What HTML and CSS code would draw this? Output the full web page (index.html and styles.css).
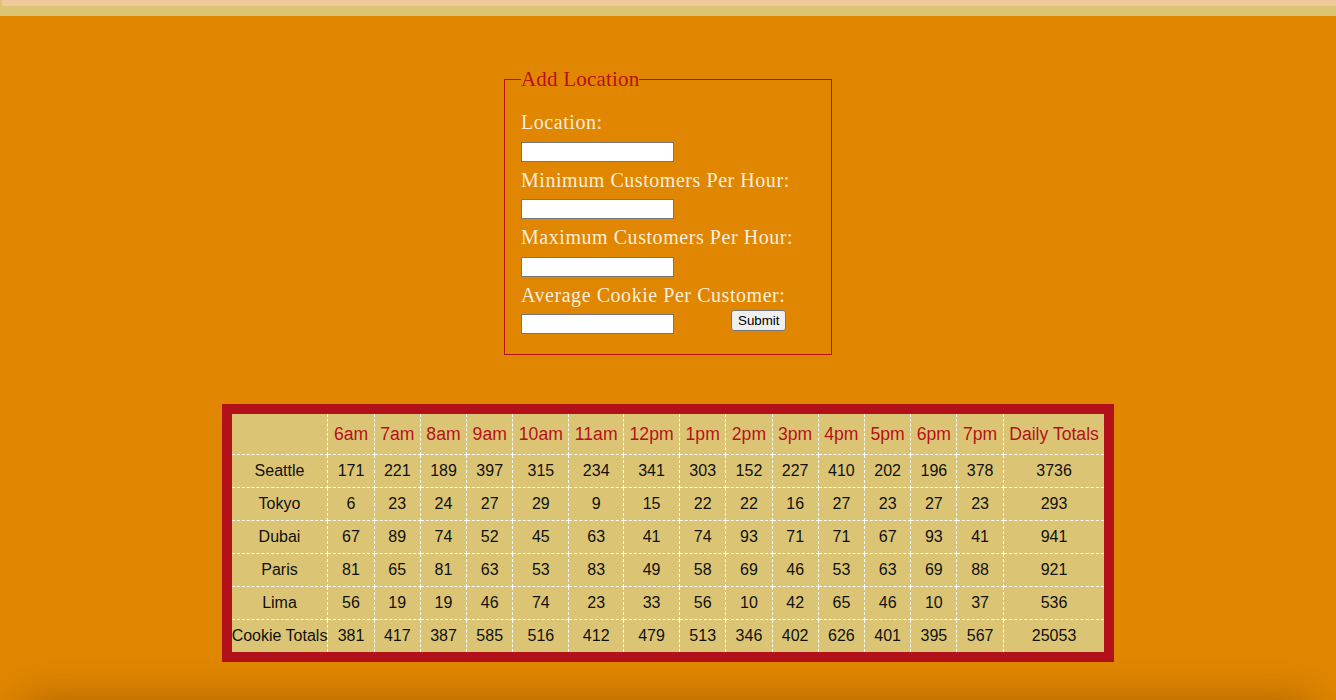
FILE: index.html
```html
<!DOCTYPE html>
<html lang="en">
<head>
<meta charset="utf-8">
<title>Salmon Cookies - Sales</title>
<link rel="stylesheet" href="styles.css">
</head>
<body>
<header class="topbar"><div class="topbar-strip"></div></header>
<main class="content">
  <form class="location-form">
    <fieldset class="form-box">
      <legend class="form-title">Add Location</legend>
      <label class="field-label" for="loc">Location:</label>
      <input class="field-input" id="loc" type="text">
      <label class="field-label" for="min">Minimum Customers Per Hour:</label>
      <input class="field-input" id="min" type="text">
      <label class="field-label" for="max">Maximum Customers Per Hour:</label>
      <input class="field-input" id="max" type="text">
      <label class="field-label" for="avg">Average Cookie Per Customer:</label>
      <div class="submit-row">
        <input class="field-input" id="avg" type="text">
        <button class="submit-btn" type="submit">Submit</button>
      </div>
    </fieldset>
  </form>

  <table class="sales">
    <thead>
      <tr>
        <th></th><th>6am</th><th>7am</th><th>8am</th><th>9am</th><th>10am</th><th>11am</th><th>12pm</th><th>1pm</th><th>2pm</th><th>3pm</th><th>4pm</th><th>5pm</th><th>6pm</th><th>7pm</th><th>Daily Totals</th>
      </tr>
    </thead>
    <tbody>
      <tr><td>Seattle</td><td>171</td><td>221</td><td>189</td><td>397</td><td>315</td><td>234</td><td>341</td><td>303</td><td>152</td><td>227</td><td>410</td><td>202</td><td>196</td><td>378</td><td>3736</td></tr>
      <tr><td>Tokyo</td><td>6</td><td>23</td><td>24</td><td>27</td><td>29</td><td>9</td><td>15</td><td>22</td><td>22</td><td>16</td><td>27</td><td>23</td><td>27</td><td>23</td><td>293</td></tr>
      <tr><td>Dubai</td><td>67</td><td>89</td><td>74</td><td>52</td><td>45</td><td>63</td><td>41</td><td>74</td><td>93</td><td>71</td><td>71</td><td>67</td><td>93</td><td>41</td><td>941</td></tr>
      <tr><td>Paris</td><td>81</td><td>65</td><td>81</td><td>63</td><td>53</td><td>83</td><td>49</td><td>58</td><td>69</td><td>46</td><td>53</td><td>63</td><td>69</td><td>88</td><td>921</td></tr>
      <tr><td>Lima</td><td>56</td><td>19</td><td>19</td><td>46</td><td>74</td><td>23</td><td>33</td><td>56</td><td>10</td><td>42</td><td>65</td><td>46</td><td>10</td><td>37</td><td>536</td></tr>
    </tbody>
    <tfoot>
      <tr><td>Cookie Totals</td><td>381</td><td>417</td><td>387</td><td>585</td><td>516</td><td>412</td><td>479</td><td>513</td><td>346</td><td>402</td><td>626</td><td>401</td><td>395</td><td>567</td><td>25053</td></tr>
    </tfoot>
  </table>
</main>
<footer class="page-footer"></footer>
</body>
</html>
```
FILE: styles.css
```css
html, body {
  margin: 0;
  padding: 0;
}

body {
  background: #e08600;
  font-family: "Liberation Serif", "Times New Roman", serif;
  overflow-x: hidden;
}

.topbar {
  height: 16px;
  background: #dbc574;
}

.topbar-strip {
  height: 6px;
  margin-left: 2px;
  background: #efc89c;
}

.content {
  padding-top: 51px;
}

.location-form {
  margin: 0;
}

.form-box {
  box-sizing: border-box;
  width: 328px;
  margin: 0 auto;
  padding: 20px 16px 20px;
  border: 1px solid #b5121b;
  display: flex;
  flex-direction: column;
  align-items: flex-start;
  gap: 7px;
}

.form-title {
  padding: 0;
  color: #b5121b;
  font-size: 21px;
  line-height: 24px;
  letter-spacing: 0.2px;
}

.field-label {
  display: block;
  color: #f9eedc;
  font-size: 20px;
  line-height: 23.5px;
  letter-spacing: 0.55px;
}

.field-input {
  box-sizing: border-box;
  width: 153px;
  height: 20px;
  margin: 0;
  padding: 1px 2px;
  border: 1px solid #767676;
  background: #fff;
  font: 13px "Liberation Sans", Arial, sans-serif;
}

.submit-row {
  display: flex;
  align-items: flex-start;
  gap: 57px;
}

.submit-btn {
  box-sizing: border-box;
  height: 21px;
  margin: -4px 0 0;
  padding: 1px 6px;
  border: 1px solid #767676;
  border-radius: 3px;
  background: #efefef;
  color: #000;
  font: 13.33px "Liberation Sans", Arial, sans-serif;
}

.sales {
  margin: 49px auto 0;
  border-collapse: collapse;
  border: 10px solid #b31119;
  background: #dbc574;
  font-family: "Liberation Sans", Arial, sans-serif;
  text-align: center;
}

.sales th,
.sales td {
  border: 1px dashed #ffffff;
}

.sales th {
  padding: 9px 5.5px;
  color: #b5121b;
  font-size: 17.6px;
  font-weight: normal;
  line-height: 22px;
}

.sales td {
  padding: 7px 0;
  color: #111;
  font-size: 16px;
  line-height: 18px;
}

.page-footer {
  height: 80px;
  margin: 40px 24px 0;
  box-shadow: 0 0 40px rgba(60, 25, 0, 0.35);
}
```
